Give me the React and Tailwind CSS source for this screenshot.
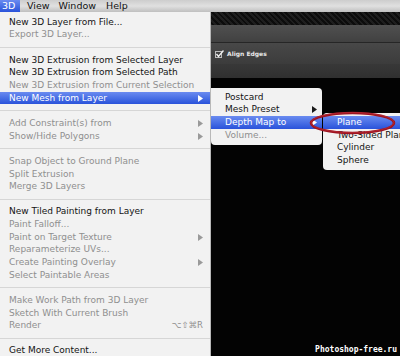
import React from "react";

const Arrow = ({ color }) => (
  <svg width="5" height="7" viewBox="0 0 5 7" className="shrink-0">
    <polygon points="0,0 5,3.5 0,7" fill={color} />
  </svg>
);

const main = [
  { t: "New 3D Layer from File..." },
  { t: "Export 3D Layer...", d: true },
  "sep",
  { t: "New 3D Extrusion from Selected Layer" },
  { t: "New 3D Extrusion from Selected Path" },
  { t: "New 3D Extrusion from Current Selection", d: true },
  { t: "New Mesh from Layer", h: true, a: true },
  "sep",
  { t: "Add Constraint(s) from", d: true, a: true },
  { t: "Show/Hide Polygons", d: true, a: true },
  "sep",
  { t: "Snap Object to Ground Plane", d: true },
  { t: "Split Extrusion", d: true },
  { t: "Merge 3D Layers", d: true },
  "sep",
  { t: "New Tiled Painting from Layer" },
  { t: "Paint Falloff...", d: true },
  { t: "Paint on Target Texture", d: true, a: true },
  { t: "Reparameterize UVs...", d: true },
  { t: "Create Painting Overlay", d: true, a: true },
  { t: "Select Paintable Areas", d: true },
  "sep",
  { t: "Make Work Path from 3D Layer", d: true },
  { t: "Sketch With Current Brush", d: true },
  { t: "Render", d: true, k: "⌥⇧⌘R" },
  "sep",
  { t: "Get More Content..." },
];

const sub1 = [
  { t: "Postcard" },
  { t: "Mesh Preset", a: true },
  { t: "Depth Map to", h: true, a: true },
  { t: "Volume...", d: true },
];

const sub2 = [
  { t: "Plane", h: true },
  { t: "Two-Sided Plane" },
  { t: "Cylinder" },
  { t: "Sphere" },
];

function Row({ it, pl }) {
  const color = it.h
    ? "text-white bg-linear-to-b from-[#6a8bf0] to-[#2a52da]"
    : it.d
    ? "text-[#8f8f8f]"
    : "text-[#141414]";
  const arrowColor = it.h ? "#ffffff" : it.d ? "#9a9a9a" : "#1a1a1a";
  return (
    <div
      className={
        "flex items-center h-[12.65px] whitespace-nowrap leading-none " +
        color +
        (pl === 9 ? " pl-[9px] pr-[7px]" : " pl-[14px] pr-[5px]")
      }
    >
      <span className="flex-1">{it.t}</span>
      {it.a && <Arrow color={arrowColor} />}
      {it.k && <span className="text-[#8f8f8f] text-[8.5px]">{it.k}</span>}
    </div>
  );
}

export default function App() {
  return (
    <div className="w-[400px] h-[356px] relative overflow-hidden bg-black flex flex-col font-['DejaVu_Sans',sans-serif] text-[9px]">
      {/* menu bar */}
      <div className="h-[12px] shrink-0 flex items-center bg-linear-to-b from-[#cdcdcd] via-[#e0e0e0] to-[#bfbfbf] text-[9.5px] text-[#111] leading-none">
        <div className="h-full w-[20px] pl-[2px] flex items-center text-white bg-linear-to-b from-[#6a8bf0] to-[#2a52da]">
          3D
        </div>
        <span className="ml-[7px]">View</span>
        <span className="ml-[9px]">Window</span>
        <span className="ml-[10px]">Help</span>
      </div>
      {/* application bar */}
      <div className="h-[13px] shrink-0 bg-[repeating-linear-gradient(45deg,#1e1e1e_0px,#1e1e1e_2px,#0c0c0c_2px,#0c0c0c_4px)]" />
      <div className="h-[17px] shrink-0 bg-linear-to-b from-[#505050] to-[#414141]" />
      <div className="h-px shrink-0 bg-[#262626]" />
      {/* options bar */}
      <div className="h-[21px] shrink-0 bg-linear-to-b from-[#484848] to-[#3c3c3c] flex items-center pl-[215px] gap-[3px]">
        <svg width="9" height="8" viewBox="0 0 9 8">
          <rect x="0.5" y="1.5" width="6" height="6" fill="none" stroke="#bdbdbd" strokeWidth="1" />
          <polyline points="1.5,4 3.5,6.5 8.5,0.5" fill="none" stroke="#f0f0f0" strokeWidth="1.4" />
        </svg>
        <span className="text-[6px] font-bold text-[#e8e8e8] leading-none">Align Edges</span>
      </div>
      <div className="h-[14px] shrink-0 bg-linear-to-b from-[#383838] to-[#303030]" />
      <div className="flex-1 bg-[#030303]" />

      {/* main 3D menu */}
      <div className="absolute left-0 top-[12px] w-[211px] h-[344px] bg-[#f2f2f2] border-r border-[#b8b8b8] pt-[4px]">
        {main.map((it, i) =>
          it === "sep" ? (
            <div key={i} className="h-[12.65px] flex items-center">
              <div className="h-px w-full bg-[#d6d6d6]" />
            </div>
          ) : (
            <Row key={i} it={it} pl={9} />
          )
        )}
      </div>

      {/* submenu 1 */}
      <div className="absolute left-[211px] top-[88px] w-[111px] py-[3px] bg-[#f2f2f2] rounded-[4px] rounded-tl-none">
        {sub1.map((it, i) => (
          <Row key={i} it={it} pl={14} />
        ))}
      </div>

      {/* submenu 2 */}
      <div className="absolute left-[323px] top-[113.3px] w-[100px] py-[3px] bg-[#f2f2f2] rounded-[4px]">
        {sub2.map((it, i) => (
          <Row key={i} it={it} pl={14} />
        ))}
      </div>

      {/* red ellipse annotation */}
      <svg className="absolute left-[309px] top-[111px]" width="87" height="24" viewBox="0 0 87 24">
        <ellipse cx="43.5" cy="12" rx="41.5" ry="10" fill="none" stroke="#9e1320" strokeWidth="2.6" />
        <ellipse cx="43.5" cy="11.5" rx="41.5" ry="10" fill="none" stroke="#c43a44" strokeWidth="0.8" opacity="0.6" />
      </svg>

      {/* watermark */}
      <div className="absolute right-[3px] bottom-[2px] text-white font-bold text-[8px] leading-none font-['DejaVu_Sans_Mono',monospace]">
        Photoshop-free.ru
      </div>
    </div>
  );
}
